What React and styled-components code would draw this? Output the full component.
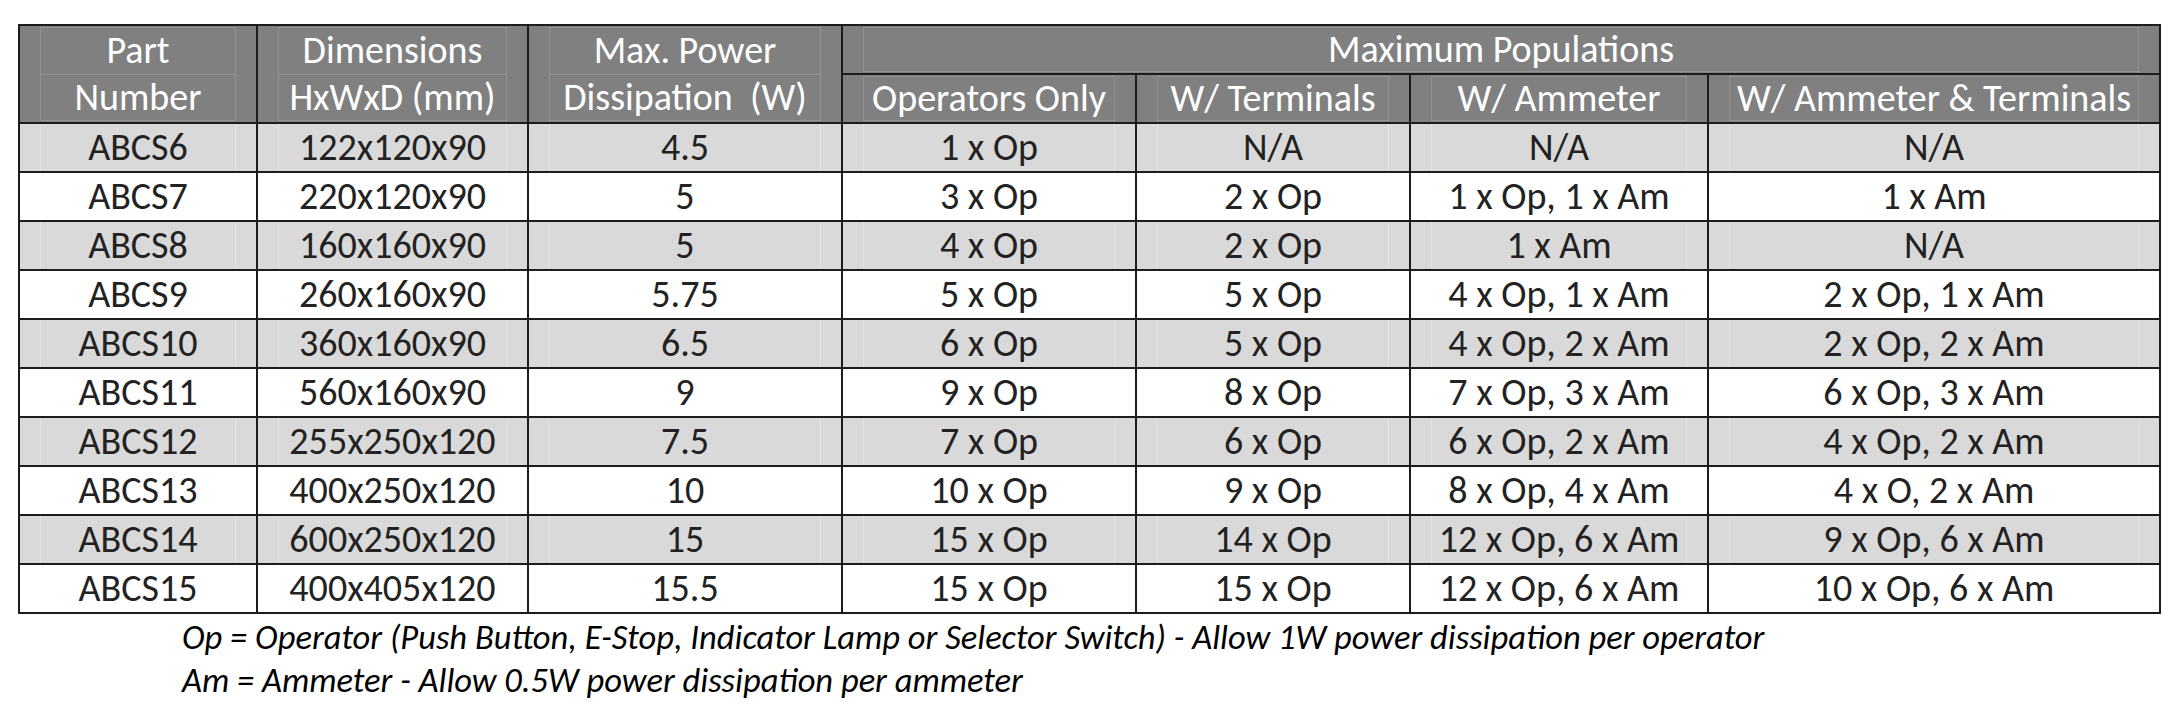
import React from "react";
import styled, { createGlobalStyle, css } from "styled-components";

const GlobalStyle = createGlobalStyle`
	html, body {
		margin: 0;
		padding: 0;
		background: #ffffff;
	}
	body {
		font-family: "Carlito", "Lato", "Liberation Sans", sans-serif;
	}
`;

const columns = [238, 271, 314, 294, 274, 298, 452];

const rows = [
	["ABCS6", "122x120x90", "4.5", "1 x Op", "N/A", "N/A", "N/A"],
	["ABCS7", "220x120x90", "5", "3 x Op", "2 x Op", "1 x Op, 1 x Am", "1 x Am"],
	["ABCS8", "160x160x90", "5", "4 x Op", "2 x Op", "1 x Am", "N/A"],
	["ABCS9", "260x160x90", "5.75", "5 x Op", "5 x Op", "4 x Op, 1 x Am", "2 x Op, 1 x Am"],
	["ABCS10", "360x160x90", "6.5", "6 x Op", "5 x Op", "4 x Op, 2 x Am", "2 x Op, 2 x Am"],
	["ABCS11", "560x160x90", "9", "9 x Op", "8 x Op", "7 x Op, 3 x Am", "6 x Op, 3 x Am"],
	["ABCS12", "255x250x120", "7.5", "7 x Op", "6 x Op", "6 x Op, 2 x Am", "4 x Op, 2 x Am"],
	["ABCS13", "400x250x120", "10", "10 x Op", "9 x Op", "8 x Op, 4 x Am", "4 x O, 2 x Am"],
	["ABCS14", "600x250x120", "15", "15 x Op", "14 x Op", "12 x Op, 6 x Am", "9 x Op, 6 x Am"],
	["ABCS15", "400x405x120", "15.5", "15 x Op", "15 x Op", "12 x Op, 6 x Am", "10 x Op, 6 x Am"],
];

function App() {
	return (
		<Page>
			<GlobalStyle />
			<Table>
				<colgroup>
					{columns.map((w, i) => (
						<col key={`col_${i}`} style={{ width: w }} />
					))}
				</colgroup>
				<thead>
					<tr>
						<HeadCell rowSpan={2} $split>
							Part
							<br />
							Number
						</HeadCell>
						<HeadCell rowSpan={2} $split>
							Dimensions
							<br />
							HxWxD (mm)
						</HeadCell>
						<HeadCell rowSpan={2} $split>
							Max. Power
							<br />
							{"Dissipation\u00a0 (W)"}
						</HeadCell>
						<HeadCell colSpan={4}>Maximum Populations</HeadCell>
					</tr>
					<tr>
						<HeadCell>Operators Only</HeadCell>
						<HeadCell>W/ Terminals</HeadCell>
						<HeadCell>W/ Ammeter</HeadCell>
						<HeadCell>W/ Ammeter &amp; Terminals</HeadCell>
					</tr>
				</thead>
				<tbody>
					{rows.map((row, r) => (
						<tr key={`row_${r}`}>
							{row.map((v, c) => (
								<Cell key={`cell_${r}_${c}`} $shade={r % 2 === 0}>
									{v}
								</Cell>
							))}
						</tr>
					))}
				</tbody>
			</Table>
			<Notes>
				<p>Op = Operator (Push Button, E-Stop, Indicator Lamp or Selector Switch) - Allow 1W power dissipation per operator</p>
				<p>Am = Ammeter - Allow 0.5W power dissipation per ammeter</p>
			</Notes>
		</Page>
	);
}

const Page = styled.div`
	padding: 24px 0 0 18px;
	width: 2180px;
	height: 722px;
	box-sizing: border-box;
	overflow: hidden;
`;

const Table = styled.table`
	border-collapse: collapse;
	table-layout: fixed;
	width: 2143px;
`;

const gridLines = css`
	&::before {
		content: "";
		position: absolute;
		top: 0;
		bottom: 0;
		left: 20px;
		right: 20px;
		border-left: 1px solid ${(p) => p.$line};
		border-right: 1px solid ${(p) => p.$line};
		pointer-events: none;
	}
`;

const HeadCell = styled.th.attrs({ $line: "#939393" })`
	position: relative;
	border: 2px solid #1c1c1c;
	background: #808080;
	color: #ffffff;
	font-weight: normal;
	font-size: 38px;
	line-height: 47px;
	height: 47px;
	padding: 0;
	text-align: center;
	vertical-align: middle;
	white-space: nowrap;
	${gridLines}
	&::before {
		top: 1px;
		bottom: 1px;
		border-top: 1px solid ${(p) => p.$line};
		border-bottom: 1px solid ${(p) => p.$line};
	}
	${(p) =>
		p.$split &&
		css`
			&::after {
				content: "";
				position: absolute;
				left: 20px;
				right: 20px;
				top: 48px;
				border-top: 1px solid ${p.$line};
			}
		`}
`;

const Cell = styled.td.attrs({ $line: "#e3e3e3" })`
	position: relative;
	border: 2px solid #1c1c1c;
	background: ${(p) => (p.$shade ? "#d9d9d9" : "#ffffff")};
	color: #222222;
	font-size: 38px;
	line-height: 47px;
	height: 47px;
	padding: 0;
	text-align: center;
	vertical-align: middle;
	white-space: nowrap;
	${(p) => p.$shade && gridLines}
`;

const Notes = styled.div`
	margin: 2px 0 0 164px;
	font-style: italic;
	font-size: 34.5px;
	line-height: 43px;
	color: #000000;

	p {
		margin: 0;
	}
`;

export default App;
